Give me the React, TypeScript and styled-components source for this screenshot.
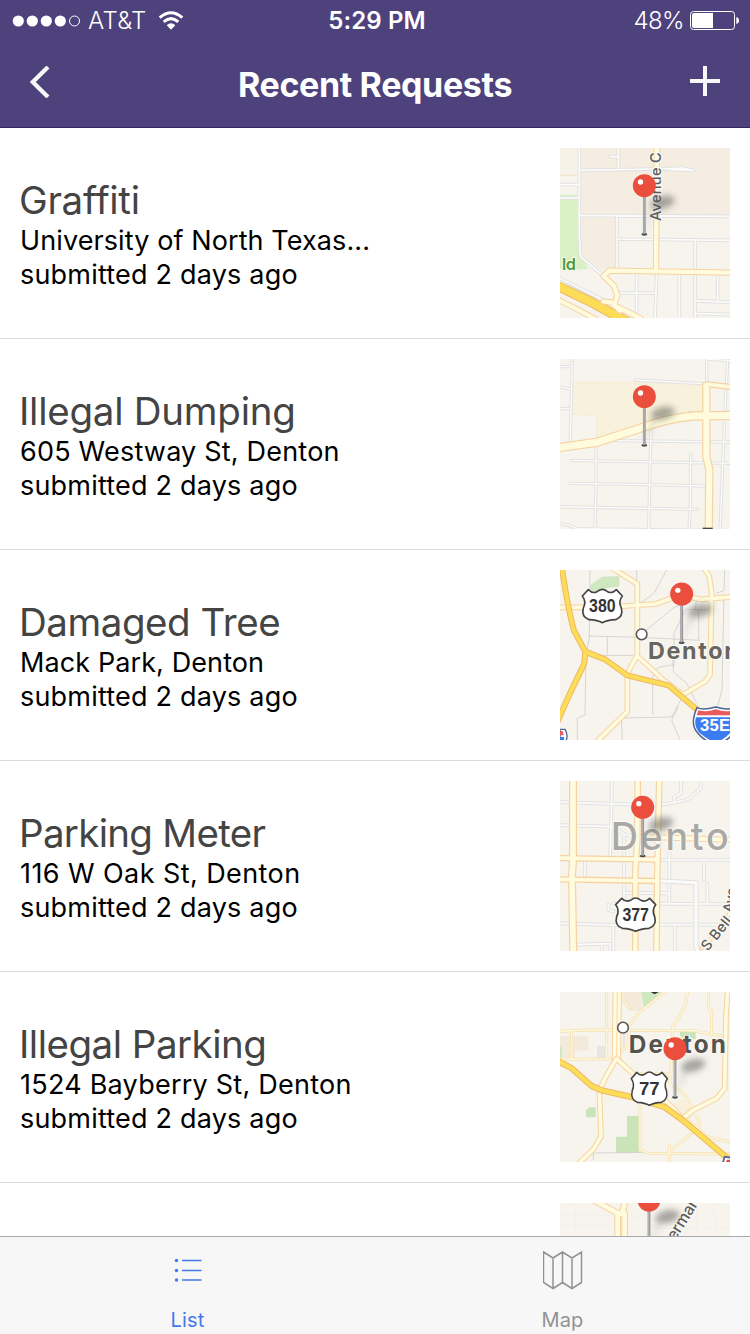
import React from 'react';
import styled, { createGlobalStyle } from 'styled-components';

const GlobalStyle = createGlobalStyle`
  html, body { margin: 0; padding: 0; background: #fff; }
  body { overflow: hidden; }
  * { box-sizing: border-box; }
`;

const Screen = styled.div`
  width: 750px;
  height: 1334px;
  display: flex;
  flex-direction: column;
  overflow: hidden;
  background: #fff;
  color: #000;
  font-family: Inter, 'Liberation Sans', sans-serif;
`;

const Header = styled.header`
  flex: none;
  height: 128px;
  display: flex;
  flex-direction: column;
  background: #4d427b;
  border-bottom: 1px solid #33265f;
  color: #fff;
`;

const StatusBar = styled.div`
  height: 40px;
  display: grid;
  grid-template-columns: 1fr auto 1fr;
  align-items: center;
  padding: 1px 10px 0 12px;
  font-size: 24px;
  line-height: 40px;
`;

const StatusGroup = styled.div<{ $end?: boolean }>`
  display: flex;
  align-items: center;
  justify-content: ${p => (p.$end ? 'flex-end' : 'flex-start')};
  svg { display: block; }
`;

const Carrier = styled.span`
  margin: 0 11px 0 7px;
  font-weight: 300;
  letter-spacing: 0.3px;
`;

const Clock = styled.span`
  padding-left: 2px;
  font-weight: 600;
  letter-spacing: 0.1px;
`;

const Percent = styled.span`
  margin-right: 6px;
  font-weight: 300;
  letter-spacing: -0.6px;
`;

const NavBar = styled.nav`
  flex: 1;
  display: flex;
  align-items: center;
  justify-content: space-between;
  padding: 0 30px;
`;

const NavTitle = styled.h1`
  margin: 2px 0 0;
  font-size: 34px;
  font-weight: 700;
  line-height: 42px;
  letter-spacing: -0.35px;
`;

const NavButton = styled.button`
  width: 30px;
  height: 30px;
  margin: 0 0 5px;
  padding: 0;
  border: 0;
  background: none;
  svg { display: block; }
`;

const List = styled.main`
  flex: 1;
  min-height: 0;
  overflow: hidden;
`;

const Row = styled.article`
  height: 211px;
  display: flex;
  align-items: center;
  justify-content: space-between;
  padding: 20px;
  border-bottom: 1px solid #dcdcde;
`;

const RowText = styled.div`
  display: flex;
  flex-direction: column;
  padding-top: 2px;
  white-space: nowrap;
`;

const RowTitle = styled.h2<{ $tracking: number }>`
  margin: 0 0 -1px -1px;
  font-size: 38.5px;
  font-weight: 400;
  line-height: 49px;
  color: #444;
  letter-spacing: ${p => p.$tracking}px;
`;

const RowLine = styled.p<{ $tracking: number }>`
  margin: 0;
  font-size: 27px;
  line-height: 34px;
  letter-spacing: ${p => p.$tracking}px;
`;

const MapFrame = styled.svg`
  display: block;
  flex: none;
  width: 170px;
  height: 170px;
  background: #f7f4ee;
`;

const TabBar = styled.footer`
  flex: none;
  height: 98px;
  display: grid;
  grid-template-columns: 1fr 1fr;
  border-top: 1px solid #a9a9ab;
  background: #f7f7f7;
`;

const Tab = styled.button<{ $active?: boolean }>`
  display: flex;
  flex-direction: column;
  align-items: center;
  padding: 13px 0 0;
  border: 0;
  background: none;
  font-family: inherit;
  font-size: 20px;
  line-height: 24px;
  letter-spacing: 0.2px;
  color: ${p => (p.$active ? '#4477ee' : '#929292')};
  svg { display: block; margin-bottom: 17px; }
`;

/* ---------- map drawing ---------- */

type Kind = 'street' | 'main' | 'soft' | 'highway';

const roadColors: Record<Kind, [string, string]> = {
  street: ['#e1e1e1', '#fbfbfa'],
  main: ['#f5d2a4', '#fffbdc'],
  soft: ['#f6dfae', '#fcf6da'],
  highway: ['#efb765', '#fbdd58'],
};

function Roads({ kind, w, d }: { kind: Kind; w: number; d: string }) {
  const [edge, fill] = roadColors[kind];
  const gap = kind === 'soft' ? 4 : 6;
  return (
    <g fill="none" strokeLinejoin="round" strokeLinecap="round">
      <path d={d} stroke={edge} strokeWidth={w} />
      <path d={d} stroke={fill} strokeWidth={w - gap} />
    </g>
  );
}

function Lines({ d }: { d: string }) {
  return <path d={d} fill="none" stroke="#d0d0ce" strokeWidth={2.6} />;
}

function Pin({ x, y }: { x: number; y: number }) {
  return (
    <g transform={`translate(${x} ${y})`}>
      <g filter="url(#pinBlur)">
        <path d="M-2 138L22 66L38 76Z" fill="#555" opacity="0.16" />
        <ellipse cx="55" cy="50" rx="37" ry="19" transform="rotate(-14 55 50)" fill="#4c4c48" opacity="0.48" />
      </g>
      <ellipse cx="0" cy="146" rx="9" ry="4" fill="#4b4b4b" />
      <path d="M0 30V145" stroke="#97979b" strokeWidth="8.5" />
      <path d="M-1 34V143" stroke="#b4b4b8" strokeWidth="3.5" />
      <circle r="34.5" fill="#ec4e3d" />
      <circle cx="-11.5" cy="-11" r="8" fill="#fff" />
    </g>
  );
}

function Shield({ x, y, label, w = 1 }: { x: number; y: number; label: string; w?: number }) {
  return (
    <g transform={`translate(${x} ${y})`}>
      <path
        transform={`scale(${w} 1)`}
        d="M-42-49Q-29-36-16-43Q-6-50 0-50Q6-50 16-43Q29-36 42-49L60-30Q47-14 57 6Q64 32 40 41Q14 42 0 50Q-14 42-40 41Q-64 32-57 6Q-47-14-60-30Z"
        fill="#fff"
        stroke="#444"
        strokeWidth="5"
        strokeLinejoin="round"
      />
      <text
        y="19"
        textAnchor="middle"
        fontFamily="'Liberation Sans', sans-serif"
        fontWeight="700"
        fontSize="54"
        textLength={label.length * (label.length === 2 ? 31 : 26.5)}
        lengthAdjust="spacingAndGlyphs"
        fill="#333"
      >
        {label}
      </text>
    </g>
  );
}

interface LabelProps {
  x: number;
  y: number;
  size: number;
  length: number;
  color: string;
  weight?: number;
  rotate?: number;
  halo?: string;
  children: string;
}

function Label({ x, y, size, length, color, weight = 500, rotate = 0, halo = '#fbf9f4', children }: LabelProps) {
  return (
    <text
      transform={`translate(${x} ${y}) rotate(${rotate})`}
      fontFamily="Inter, sans-serif"
      fontSize={size}
      fontWeight={weight}
      textLength={length}
      fill={color}
      stroke={halo}
      strokeWidth="7"
      strokeLinejoin="round"
      paintOrder="stroke"
    >
      {children}
    </text>
  );
}

function Town({ x, y }: { x: number; y: number }) {
  return <circle cx={x} cy={y} r="16" fill="#fff" stroke="#555" strokeWidth="4.5" />;
}

function GraffitiMap() {
  return (
    <MapFrame viewBox="30 24 510 510">
      <path d="M30 24H540V224H88V105H30Z" fill="#f5ede1" />
      <path d="M30 24H86V104H30Z" fill="#f7f2e8" />
      <path d="M90 228H196V388H150L90 345Z" fill="#f5ede1" />
      <path d="M30 164H82V290L92 350L116 388H30Z" fill="#d8f0c4" />
      <path d="M30 106H80" stroke="#f2e2c8" strokeWidth="3" />
      <Roads
        kind="street"
        w={11}
        d="M88 20V290L92 350L160 408M205 20V84M180 50H203M88 91L320 87L400 84L430 91L360 88M20 134H86M20 174H86M88 226L540 229M201 229V390M201 297L540 301M435 301V534M260 400V534M200 459H318M320 400L315 534M388 404V534M503 404V482M435 482L540 487M435 520L540 524M30 415L160 480M30 425L140 484"
      />
      <Roads kind="highway" w={30} d="M10 432L125 487L230 545" />
      <Roads kind="main" w={18} d="M10 472L90 512L150 545" />
      <Roads kind="main" w={19} d="M321 10L318 392M540 398L322 394L178 392L161 408L192 438L202 466L192 496L270 534M160 484L186 488L210 512" />
      <Label x={334} y={243} size={44} length={206} color="#5c5c5c" rotate={-90}>Avenue C</Label>
      <Label x={36} y={391} size={49} length={42} color="#4d9a3f" weight={600} halo="#f7faef">ld</Label>
      <Pin x={283} y={137} />
    </MapFrame>
  );
}

function DumpingMap() {
  return (
    <MapFrame viewBox="30 27 510 510">
      <path d="M66 97L460 100V195L370 200L140 264V197L66 193Z" fill="#f8f2dc" stroke="#f4e9cf" strokeWidth="2" />
      <Roads
        kind="street"
        w={10}
        d="M67 20L65 115L60 285M20 50H62M20 110L65 117M20 176H58M256 90L462 101M470 27V95M470 27L540 32M533 30L524 200L510 540M190 272L540 276M303 240L299 400L296 540M65 331L540 340M60 400L300 404L463 408M138 290V400L135 540M422 313L421 470L417 540M20 470L442 478M20 522Q50 520 80 536L540 542"
      />
      <circle cx="422" cy="191" r="8" fill="#f5d2a4" />
      <circle cx="464" cy="149" r="8" fill="#f5d2a4" />
      <g fill="none" strokeLinejoin="round">
        <path d="M469 97V320L478 358L476 550" stroke="#f5d2a4" strokeWidth="25" />
        <path d="M560 113L468 102" stroke="#f5d2a4" strokeWidth="18" />
        <path d="M10 295L140 277L270 235Q350 205 430 198L560 196" stroke="#f5d2a4" strokeWidth="28" />
        <path d="M469 100V320L478 358L476 550" stroke="#fffbdc" strokeWidth="18" />
        <path d="M560 113L468 102" stroke="#fffbdc" strokeWidth="11" />
        <path d="M10 295L140 277L270 235Q350 205 430 198L560 196" stroke="#fffbdc" strokeWidth="21" />
      </g>
      <path d="M458 536H488" stroke="#444" strokeWidth="6" />
      <Pin x={283} y={140} />
    </MapFrame>
  );
}

function TreeMap() {
  return (
    <MapFrame viewBox="30 30 510 510">
      <path d="M122 74L156 50L208 48V80L172 84L145 100L120 88Z" fill="#cfe8bf" />
      <Lines d="M120 20L118 232L108 290L105 465L82 475V540M350 30L312 100L265 134M115 228L270 232L450 241M172 230V283M112 286H250M260 30V60M372 320V220L408 145M446 150V240M410 148L480 150M275 222L372 142L440 118M308 464V350L325 322L372 314M368 290L370 336L410 370L440 430M215 474L365 471L400 405M440 475L540 470M365 480L390 540M365 480L385 440M214 478L217 540M498 100L522 92L524 30M522 100L516 390L500 450M436 150L440 115" />
      <Roads kind="main" w={17} d="M20 142H160L316 132L395 104L450 118L560 110M180 20L262 72V285L232 340V455L135 550M262 288L340 360L400 405M400 403L466 364L480 345L485 100L478 50L460 20" />
      <Roads kind="highway" w={18} d="M34 10Q52 140 72 212L106 275L165 298L232 346L355 376L460 465M106 275L103 310L60 400L20 490" />
      <Town x={275} y={223} />
      <Label x={294} y={296} size={70} length={272} color="#68665f" weight={700}>Denton</Label>
      <Shield x={157} y={138} label="380" />
      <g>
        <path d="M441 443Q460 452 497 441Q534 452 553 443Q574 490 556 515Q530 545 497 556Q464 545 440 515Q420 490 441 443Z" fill="#fff" stroke="#4e6496" strokeWidth="4.5" />
        <path d="M445 451Q470 458 497 448Q524 458 549 451L554 466H440Z" fill="#ea5a5c" />
        <path d="M438 472H556Q562 500 540 520Q520 540 497 548Q474 540 450 520Q430 500 438 472Z" fill="#3b7df0" />
        <text x="450" y="514" fontFamily="'Liberation Sans', sans-serif" fontWeight="700" fontSize="50" textLength="90" fill="#fff">35E</text>
      </g>
      <path d="M30 508H45Q56 525 47 545H30Z" fill="#fff" stroke="#4e6496" strokeWidth="4" />
      <path d="M30 513H38L41 526H30Z" fill="#ea5a5c" />
      <path d="M30 531H42V545H30Z" fill="#3b7df0" />
      <Pin x={395} y={102} />
    </MapFrame>
  );
}

function MeterMap() {
  return (
    <MapFrame viewBox="30 33 510 510">
      <Roads
        kind="street"
        w={11}
        d="M185 33V100L180 265M20 96L260 104M325 105Q400 95 420 85L452 55V30M393 30V70L372 82V98M20 165L185 170L222 192L262 205M222 195V400M105 270V320M358 235V400M320 270H540M462 272V330M222 368L358 370M325 402H540M472 340V400M190 400L540 402M175 403V420L190 424M30 460L250 467M320 464H540M375 462V540M75 524L180 521V543M155 522V543M190 467V540"
      />
      <Roads kind="street" w={15} d="M322 332L438 338V530L445 545" />
      <Roads kind="main" w={18} d="M322 202L560 210M262 200L322 202" />
      <g fill="none" stroke="#f5d2a4">
        <path d="M69 20V270L66 320L70 560" strokeWidth="24" />
        <path d="M263 20L262 210L256 300V560M328 20L322 300L319 560" strokeWidth="20" />
        <path d="M10 264L322 269M10 328L320 333" strokeWidth="19" />
      </g>
      <g fill="none" stroke="#fffbdc">
        <path d="M69 20V270L66 320L70 560" strokeWidth="17" />
        <path d="M263 20L262 210L256 300V560M328 20L322 300L319 560" strokeWidth="13" />
        <path d="M10 264L322 269M10 328L320 333" strokeWidth="11" />
      </g>
      <Label x={182} y={241} size={113} length={354} color="#aaa9a5" weight={500}>Dento</Label>
      <Roads kind="main" w={12} d="M455 535L525 460L550 400" />
      <Label x={473} y={545} size={43} length={118} color="#5c5c5c" rotate={-51}>S Bell</Label>
      <Label x={548} y={430} size={43} length={76} color="#5c5c5c" rotate={-80}>Ave</Label>
      <Shield x={257} y={434} label="377" />
      <Pin x={278} y={112} />
    </MapFrame>
  );
}

function ParkingMap() {
  return (
    <MapFrame viewBox="30 36 510 510">
      <path d="M30 168H115V212H75V238H30Z" fill="#f4eadc" />
      <path d="M222 36H275V92H240L222 72Z" fill="#f4eadc" />
      <path d="M141 198H165V234H141Z" fill="#e7e6e2" />
      <path d="M275 36H335L300 70L280 82Z" fill="#d0e8c0" />
      <path d="M390 155H437V178H405L390 168Z" fill="#c9e4b8" />
      <path d="M120 382H137V412H108V390Z" fill="#c9e4b8" />
      <path d="M231 408H267V518H198V470H231Z" fill="#c9e4b8" />
      <path d="M30 195Q45 215 30 240Z" fill="#d0e8c0" />
      <path d="M350 378L400 356L424 390L400 410Z" fill="#f8f0d8" />
      <Lines d="M130 540V519L290 517M222 160V205" />
      <Roads kind="soft" w={9} d="M345 36L270 95L235 140V190L215 215M170 30V238M215 30V55L240 85M20 154L110 150L430 152L540 172M65 150V238M20 238L195 237M413 30L408 70L388 110L368 140L362 290M475 30V80L485 95L484 165M270 380V508L295 520L540 522M358 495V540M250 282H360V310L405 345L425 378L420 410M405 415L440 440L470 470L540 486M438 408L450 430L430 455L360 515" />
      <Roads kind="main" w={28} d="M202 20L199 236" />
      <path d="M202 36L200 230" stroke="#f5d2a4" strokeWidth="2.5" />
      <Roads kind="main" w={17} d="M199 236L168 290L148 330L153 470L130 508L80 556M199 236L250 282L340 355L400 418M400 414L430 390L500 355L524 325L528 110L534 20" />
      <Roads kind="highway" w={19} d="M15 238L65 265L125 318L155 331L250 352L345 382L400 422L560 558" />
      <path d="M302 36H326L314 43Z" fill="#333" />
      <Town x={219} y={143} />
      <Label x={236} y={218} size={73} length={292} color="#55534e" weight={700}>Denton</Label>
      <Shield x={298} y={326} label="77" w={0.9} />
      <path d="M518 552L524 530L545 534V552Z" fill="#fff" stroke="#4e6496" strokeWidth="5" />
      <path d="M526 550L531 539H540V550Z" fill="#e5484d" />
      <Pin x={375} y={206} />
    </MapFrame>
  );
}

function ShermanMap() {
  return (
    <MapFrame viewBox="180 84 510 510">
      <path d="M180 120H340M225 84V190M395 120L470 160H690M590 84V190M640 84L650 190M180 150H340" fill="none" stroke="#f2efe8" strokeWidth="3" />
      <Roads kind="main" w={20} d="M275 72L350 113L368 118M377 70L366 118M353 115V240M374 115V240" />
      <Label x={494} y={249} size={48} length={202} color="#5c5c5c" rotate={-58}>Sherman</Label>
      <Pin x={447} y={75} />
    </MapFrame>
  );
}

/* ---------- content ---------- */

const requests = [
  { title: 'Graffiti', tt: -0.3, place: 'University of North Texas...', pt: 0.1, Map: GraffitiMap },
  { title: 'Illegal Dumping', tt: -0.25, place: '605 Westway St, Denton', pt: 0.2, Map: DumpingMap },
  { title: 'Damaged Tree', tt: -0.45, place: 'Mack Park, Denton', pt: 0.1, Map: TreeMap },
  { title: 'Parking Meter', tt: -0.7, place: '116 W Oak St, Denton', pt: 0.42, Map: MeterMap },
  { title: 'Illegal Parking', tt: -0.5, place: '1524 Bayberry St, Denton', pt: 0.24, Map: ParkingMap },
  { title: '', tt: 0, place: '', pt: 0, Map: ShermanMap },
];

export default function App() {
  return (
    <Screen>
      <GlobalStyle />
      <Header>
        <StatusBar>
          <StatusGroup>
            <svg width="69" height="12" viewBox="0 0 69 12" fill="#fff">
              {[6.3, 20.3, 34.3, 48.3].map(x => <circle key={x} cx={x} cy="6" r="5.6" />)}
              <circle cx="62.5" cy="6" r="5" fill="none" stroke="#fff" strokeWidth="1" />
            </svg>
            <Carrier>AT&amp;T</Carrier>
            <svg width="26" height="20" viewBox="0 0 26 20" fill="none" stroke="#fff" strokeWidth="3">
              <path d="M1.7 6.7Q13-3.2 24.3 6.7" />
              <path d="M5.7 10.9Q13 4.4 20.3 10.9" />
              <path d="M8.7 14.2Q13 10.4 17.3 14.2L13 18.7Z" fill="#fff" stroke="none" />
            </svg>
          </StatusGroup>
          <Clock>5:29 PM</Clock>
          <StatusGroup $end>
            <Percent>48%</Percent>
            <svg width="50" height="20" viewBox="0 0 50 20">
              <defs>
                <filter id="pinBlur" x="-60%" y="-60%" width="220%" height="220%">
                  <feGaussianBlur stdDeviation="10" />
                </filter>
              </defs>
              <rect x="0.5" y="0.5" width="44" height="18" rx="3" fill="none" stroke="#fff" />
              <path d="M4 2H23V17H4Q2 17 2 15V4Q2 2 4 2Z" fill="#fff" />
              <path d="M46.3 6Q49 6.6 49 9.5Q49 12.4 46.3 13Z" fill="#fff" />
            </svg>
          </StatusGroup>
        </StatusBar>
        <NavBar>
          <NavButton aria-label="Back">
            <svg width="30" height="32" viewBox="0 0 30 32">
              <path d="M18 1L2.8 16L18 31" fill="none" stroke="#f7f7f7" strokeWidth="4.2" />
            </svg>
          </NavButton>
          <NavTitle>Recent Requests</NavTitle>
          <NavButton aria-label="Add">
            <svg width="30" height="30" viewBox="0 0 30 30">
              <path d="M0 15H30M15 0V30" stroke="#f7f7f7" strokeWidth="4" />
            </svg>
          </NavButton>
        </NavBar>
      </Header>
      <List>
        {requests.map(({ title, tt, place, pt, Map }, i) => (
          <Row key={i}>
            <RowText>
              {title && <RowTitle $tracking={tt}>{title}</RowTitle>}
              {place && <RowLine $tracking={pt}>{place}</RowLine>}
              {title && <RowLine $tracking={0.2}>submitted 2 days ago</RowLine>}
            </RowText>
            <Map />
          </Row>
        ))}
      </List>
      <TabBar>
        <Tab $active>
          <svg width="40" height="41" viewBox="-4.5 0 40 41" stroke="#4477ee" fill="#4477ee">
            <path d="M9.5 10.5H29M9.5 20.5H29M9.5 30H29" strokeWidth="1.6" />
            <g stroke="none">
              <circle cx="4" cy="10.5" r="1.7" />
              <circle cx="4" cy="20.5" r="1.7" />
              <circle cx="4" cy="30" r="1.7" />
            </g>
          </svg>
          List
        </Tab>
        <Tab>
          <svg width="40" height="41" viewBox="0.5 0.5 40 41" fill="none" stroke="#929292" strokeWidth="1.5">
            <path d="M1 2.5L10.5 8.5L20 2.5L29.5 8.5L39 2.5V33L29.5 39L20 33L10.5 39L1 33ZM10.5 8.5V39M20 2.5V33M29.5 8.5V39" />
          </svg>
          Map
        </Tab>
      </TabBar>
    </Screen>
  );
}
